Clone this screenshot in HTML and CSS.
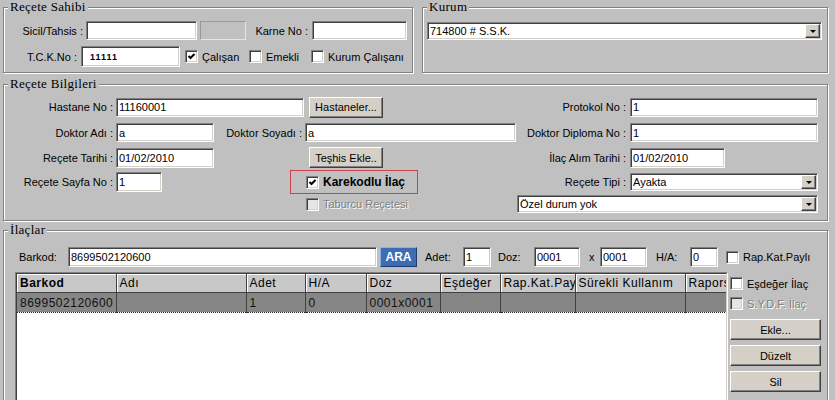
FILE: index.html
```html
<!DOCTYPE html>
<html lang="tr">
<head>
    <meta charset="UTF-8">
    <title>Reçete Girişi</title>
    <link rel="stylesheet" href="styles.css">
</head>
<body>
    <div class="top">
        <fieldset class="box sahibi">
            <legend>Reçete Sahibi</legend>
            <div class="row r-sicil">
                <label class="lbl w-sicil">Sicil/Tahsis :</label>
                <input class="field w111" type="text" value="">
                <div class="blank"></div>
                <label class="lbl w-karne">Karne No :</label>
                <input class="field w95" type="text" value="">
            </div>
            <div class="row r-tck">
                <label class="lbl w-tck">T.C.K.No :</label>
                <input class="field w99 tck" type="text" value="11111">
                <div class="opt first"><span class="chk on"><svg viewBox="0 0 11 11"><path d="M2.5 5 L4.5 7 L8.5 3"/></svg></span>Çalışan</div>
                <div class="opt second"><span class="chk"></span>Emekli</div>
                <div class="opt"><span class="chk"></span>Kurum Çalışanı</div>
            </div>
        </fieldset>

        <fieldset class="box kurum">
            <legend>Kurum</legend>
            <div class="combo w-kurum"><span class="txt">714800 # S.S.K.</span><span class="drop"><i></i></span></div>
        </fieldset>
    </div>

    <fieldset class="box bilgi">
        <legend>Reçete Bilgileri</legend>
        <div class="row r-a">
            <label class="lbl w112">Hastane No :</label>
            <input class="field w188" type="text" value="11160001">
            <button class="btn w74 gap5">Hastaneler...</button>
            <div class="fill"></div>
            <label class="rlbl">Protokol No :</label>
            <input class="field w188 right" type="text" value="1">
        </div>
        <div class="row r-b">
            <label class="lbl w112">Doktor Adı :</label>
            <input class="field w98" type="text" value="a">
            <label class="lbl w-soyadi">Doktor Soyadı :</label>
            <input class="field w211" type="text" value="a">
            <div class="fill"></div>
            <label class="rlbl">Doktor Diploma No :</label>
            <input class="field w188 right" type="text" value="1">
        </div>
        <div class="row r-c">
            <label class="lbl w112">Reçete Tarihi :</label>
            <input class="field w98" type="text" value="01/02/2010">
            <button class="btn w74 teshis">Teşhis Ekle..</button>
            <div class="fill"></div>
            <label class="rlbl">İlaç Alım Tarihi :</label>
            <input class="field w95 alim" type="text" value="01/02/2010">
        </div>
        <div class="row r-d">
            <label class="lbl w112">Reçete Sayfa No :</label>
            <input class="field w46" type="text" value="1">
            <div class="kare"><span class="chk on"><svg viewBox="0 0 11 11"><path d="M2.5 5 L4.5 7 L8.5 3"/></svg></span>Karekodlu İlaç</div>
            <div class="fill"></div>
            <label class="rlbl">Reçete Tipi :</label>
            <div class="combo w188 right"><span class="txt">Ayakta</span><span class="drop"><i></i></span></div>
        </div>
        <div class="row r-e">
            <div class="opt off taburcu"><span class="chk"></span>Taburcu Reçetesi</div>
            <div class="fill"></div>
            <div class="combo w301 right"><span class="txt">Özel durum yok</span><span class="drop"><i></i></span></div>
        </div>
    </fieldset>

    <fieldset class="box ilac">
        <legend>İlaçlar</legend>
        <div class="row r-barkod">
            <label class="plain w-barkod">Barkod:</label>
            <input class="field w309" type="text" value="8699502120600">
            <button class="ara">ARA</button>
            <label class="plain w-adet">Adet:</label>
            <input class="field w28" type="text" value="1">
            <label class="plain w-doz">Doz:</label>
            <input class="field w46" type="text" value="0001">
            <label class="plain w-x">x</label>
            <input class="field w47" type="text" value="0001">
            <label class="plain w-ha">H/A:</label>
            <input class="field w28" type="text" value="0">
            <div class="opt rap"><span class="chk"></span>Rap.Kat.Paylı</div>
        </div>
        <div class="main">
            <div class="grid">
                <div class="grid-inner">
                    <table>
                        <colgroup>
                            <col style="width:99px"><col style="width:130px"><col style="width:59px">
                            <col style="width:61px"><col style="width:74px"><col style="width:60px">
                            <col style="width:75px"><col style="width:110px"><col style="width:80px">
                        </colgroup>
                        <thead>
                            <tr>
                                <th class="bold">Barkod</th><th>Adı</th><th>Adet</th><th>H/A</th><th>Doz</th>
                                <th>Eşdeğer</th><th>Rap.Kat.Pay</th><th>Sürekli Kullanım</th><th>Raporsuz</th>
                            </tr>
                        </thead>
                        <tbody>
                            <tr class="sel">
                                <td>8699502120600</td><td></td><td>1</td><td>0</td><td>0001x0001</td>
                                <td></td><td></td><td></td><td></td>
                            </tr>
                        </tbody>
                    </table>
                </div>
            </div>
            <div class="side">
                <div class="opt esdeger"><span class="chk"></span>Eşdeğer İlaç</div>
                <div class="opt off sydf"><span class="chk"></span>S.Y.D.F. İlaç</div>
                <button class="btn side-btn first-btn">Ekle...</button>
                <button class="btn side-btn">Düzelt</button>
                <button class="btn side-btn">Sil</button>
            </div>
        </div>
    </fieldset>
</body>
</html>
```

FILE: styles.css
```css
body {
    margin: 0;
    width: 835px;
    height: 400px;
    overflow: hidden;
    background-color: #c0c0c0;
    font-family: "Liberation Sans", Arial, sans-serif;
    font-size: 11px;
    color: #000;
}

/* group boxes */
.box {
    margin: 0;
    padding: 0;
    min-width: 0;
    box-sizing: border-box;
    border: 1px solid #808080;
    box-shadow: inset 1px 1px 0 #fff, 1px 1px 0 #fff;
}

.box legend {
    margin-left: 4px;
    padding: 0 2px;
    font-family: "Liberation Serif", "Times New Roman", serif;
    font-size: 13px;
    line-height: 14px;
    letter-spacing: 0.3px;
    background-color: #c0c0c0;
}

.top {
    display: flex;
    gap: 9px;
    padding-left: 3px;
}

.sahibi {
    width: 410px;
    padding-bottom: 5px;
}

.kurum {
    width: 406px;
}

.bilgi {
    width: 825px;
    margin: 4px 0 0 3px;
    padding-bottom: 7px;
}

.ilac {
    width: 825px;
    height: 200px;
    margin: 2px 0 0 3px;
}

/* rows */
.row {
    display: flex;
    align-items: center;
}

.fill {
    flex: 1;
}

.lbl,
.rlbl {
    box-sizing: border-box;
    text-align: right;
    padding-right: 3px;
    white-space: nowrap;
}

.rlbl {
    padding-right: 4px;
}

.plain {
    box-sizing: border-box;
    white-space: nowrap;
}

/* sunken edit */
.field {
    box-sizing: border-box;
    height: 19px;
    margin: 0;
    padding: 0 2px;
    border: 1px solid;
    border-color: #808080 #fff #fff #808080;
    box-shadow: inset 1px 1px 0 #404040, inset -1px -1px 0 #d4d0c8;
    background-color: #fff;
    font-family: "Liberation Sans", Arial, sans-serif;
    font-size: 11px;
    color: #000;
    outline: none;
}

.blank {
    box-sizing: border-box;
    width: 46px;
    height: 19px;
    margin-left: 3px;
    border: 1px solid;
    border-color: #9a9a9a #e4e4e4 #e4e4e4 #9a9a9a;
    background-color: #c0c0c0;
}

.combo {
    box-sizing: border-box;
    display: flex;
    align-items: center;
    height: 18px;
    border: 1px solid;
    border-color: #808080 #fff #fff #808080;
    box-shadow: inset 1px 1px 0 #404040, inset -1px -1px 0 #d4d0c8;
    background-color: #fff;
}

.combo .txt {
    flex: 1;
    padding-left: 2px;
    white-space: nowrap;
}

.combo .drop {
    box-sizing: border-box;
    display: flex;
    align-items: center;
    justify-content: center;
    width: 15px;
    height: 14px;
    margin-right: 1px;
    border: 1px solid;
    border-color: #fff #404040 #404040 #fff;
    box-shadow: inset -1px -1px 0 #808080;
    background-color: #d4d0c8;
}

.combo .drop i {
    width: 0;
    height: 0;
    border-left: 3px solid transparent;
    border-right: 3px solid transparent;
    border-top: 3px solid #000;
}

/* raised button */
.btn {
    box-sizing: border-box;
    height: 21px;
    margin: 0;
    padding: 0;
    border: 1px solid;
    border-color: #fff #404040 #404040 #fff;
    box-shadow: inset -1px -1px 0 #808080;
    background-color: #d4d0c8;
    font-family: "Liberation Sans", Arial, sans-serif;
    font-size: 11px;
    color: #000;
}

.ara {
    box-sizing: border-box;
    width: 37px;
    height: 20px;
    margin: 0 0 0 3px;
    padding: 0;
    border: 1px solid;
    border-color: #8fb0e0 #1c3c70 #1c3c70 #8fb0e0;
    background-color: #3b6cb4;
    color: #fff;
    font-family: "Liberation Sans", Arial, sans-serif;
    font-size: 12px;
    font-weight: bold;
}

/* check boxes */
.opt {
    display: flex;
    align-items: center;
    gap: 4px;
    white-space: nowrap;
}

.chk {
    box-sizing: border-box;
    display: inline-block;
    width: 13px;
    height: 13px;
    border: 1px solid;
    border-color: #808080 #fff #fff #808080;
    box-shadow: inset 1px 1px 0 #404040, inset -1px -1px 0 #d4d0c8;
    background-color: #fff;
    flex: none;
}

.chk svg {
    display: block;
    width: 11px;
    height: 11px;
}

.chk svg path {
    fill: none;
    stroke: #000;
    stroke-width: 2;
}

.off {
    color: #808080;
    text-shadow: 1px 1px 0 #fff;
}

.off .chk {
    background-color: #e6e6e6;
}

/* widths */
.w28 { width: 28px; }
.w46 { width: 46px; }
.w47 { width: 47px; }
.w74 { width: 74px; }
.w95 { width: 95px; }
.w98 { width: 98px; }
.w99 { width: 99px; }
.w111 { width: 111px; }
.w112 { width: 112px; }
.w188 { width: 188px; }
.w211 { width: 211px; }
.w301 { width: 301px; }
.w309 { width: 309px; }

.right {
    margin-right: 9px;
}

/* Reçete Sahibi */
.r-sicil {
    height: 19px;
    margin-top: 7px;
}

.w-sicil {
    width: 82px;
}

.w-karne {
    width: 66px;
    padding-right: 4px;
}

.r-tck {
    height: 21px;
    margin-top: 6px;
}

.w-tck {
    width: 77px;
    padding-right: 4px;
}

.tck {
    height: 21px;
    padding-left: 8px;
    font-size: 9px;
    font-weight: bold;
    letter-spacing: 1px;
}

.opt.first {
    width: 64px;
    margin-left: 5px;
}

.opt.second {
    width: 62px;
}

/* Kurum */
.w-kurum {
    width: 395px;
    margin: 8px 0 0 4px;
}

/* Reçete Bilgileri */
.r-a {
    height: 20px;
    margin-top: 6px;
}

.gap5 {
    margin-left: 5px;
}

.r-b {
    height: 19px;
    margin-top: 6px;
}

.w-soyadi {
    width: 91px;
}

.r-c {
    height: 21px;
    margin-top: 5px;
}

.r-c .field {
    height: 20px;
}

.teshis {
    margin-left: 95px;
}

.alim {
    margin-right: 102px;
}

.r-d {
    height: 24px;
    margin-top: 2px;
}

.r-d .field {
    height: 20px;
}

.kare {
    box-sizing: border-box;
    display: flex;
    align-items: center;
    gap: 4px;
    width: 128px;
    height: 24px;
    margin-left: 128px;
    padding-left: 15px;
    border: 1px solid #d0404c;
    font-size: 12px;
    font-weight: bold;
}

.r-e {
    height: 18px;
    margin-top: 1px;
}

.taburcu {
    margin-left: 302px;
}

/* İlaçlar */
.r-barkod {
    height: 20px;
    margin-top: 10px;
}

.r-barkod .field {
    height: 20px;
}

.w-barkod {
    width: 64px;
    padding-left: 15px;
}

.w-adet {
    width: 38px;
    margin-left: 8px;
}

.w-doz {
    width: 36px;
    margin-left: 7px;
}

.w-x {
    width: 11px;
    margin-left: 9px;
}

.w-ha {
    width: 34px;
    margin-left: 9px;
}

.rap {
    margin-left: 8px;
}

.main {
    display: flex;
    margin-top: 5px;
}

.grid {
    box-sizing: border-box;
    width: 713px;
    height: 150px;
    margin-left: 11px;
    border: 1px solid;
    border-color: #808080 #fff #fff #808080;
}

.grid-inner {
    height: 100%;
    overflow: hidden;
    border: 1px solid;
    border-color: #404040 #d4d0c8 #d4d0c8 #404040;
    background-color: #fff;
    box-sizing: border-box;
}

.grid table {
    table-layout: fixed;
    width: 748px;
    border-collapse: collapse;
    font-size: 12px;
    letter-spacing: 0.5px;
}

.grid th,
.grid td {
    padding: 0 0 0 3px;
    text-align: left;
    white-space: nowrap;
    overflow: hidden;
    border-right: 1px solid #404040;
}

.grid th {
    height: 18px;
    font-weight: normal;
    background-color: #c8c8c8;
    border-bottom: 1px solid #404040;
    box-shadow: inset 1px 1px 0 #fff;
}

.grid th.bold {
    font-weight: bold;
}

.grid .sel td {
    height: 19px;
    background-color: #868686;
    color: #111;
    border-bottom: 1px dotted #222;
}

.side {
    display: flex;
    flex-direction: column;
    width: 92px;
    margin-left: 2px;
}

.esdeger {
    margin-top: 5px;
}

.sydf {
    margin-top: 7px;
}

.side-btn {
    width: 91px;
    margin-top: 5px;
}

.side-btn.first-btn {
    margin-top: 9px;
}
```
